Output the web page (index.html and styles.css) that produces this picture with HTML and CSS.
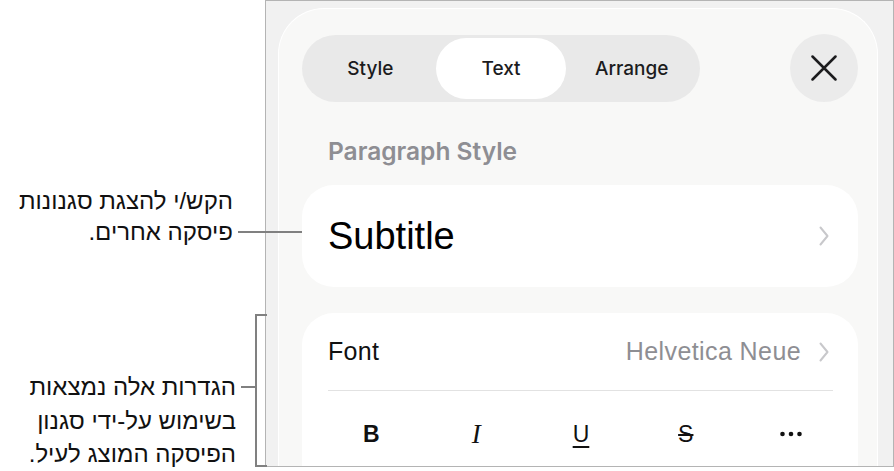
FILE: index.html
```html
<!DOCTYPE html>
<html lang="he">
<head>
    <meta charset="UTF-8">
    <meta name="viewport" content="width=device-width, initial-scale=1.0">
    <title>Paragraph Style</title>
    <link rel="stylesheet" href="styles.css">
</head>
<body>

<div class="page">
    <div class="notes">
        <p class="note note-tap" dir="rtl">הקש/י להצגת סגנונות<br>פיסקה אחרים.</p>
        <p class="note note-settings" dir="rtl">הגדרות אלה נמצאות<br>בשימוש על-ידי סגנון<br>הפיסקה המוצג לעיל.</p>
    </div>

    <div class="frame">
        <div class="sheet">
            <div class="sheet-header">
                <div class="tabs">
                    <span class="tab">Style</span>
                    <span class="tab tab-active">Text</span>
                    <span class="tab">Arrange</span>
                </div>
                <button class="close" aria-label="Close">
                    <svg width="26" height="26" viewBox="0 0 26 26">
                        <path d="M1.5 1.5 L24.5 24.5 M24.5 1.5 L1.5 24.5" />
                    </svg>
                </button>
            </div>

            <div class="section-title">Paragraph Style</div>

            <div class="card style-card">
                <span class="style-name">Subtitle</span>
                <svg class="chevron" width="10" height="20" viewBox="0 0 10 20">
                    <path d="M1.5 1.5 L8.5 10 L1.5 18.5" />
                </svg>
            </div>

            <div class="card font-card">
                <div class="font-row">
                    <span class="font-label">Font</span>
                    <span class="font-value">Helvetica Neue</span>
                    <svg class="chevron" width="10" height="20" viewBox="0 0 10 20">
                        <path d="M1.5 1.5 L8.5 10 L1.5 18.5" />
                    </svg>
                </div>
                <div class="format-row">
                    <span class="fmt fmt-bold">B</span>
                    <span class="fmt fmt-italic">I</span>
                    <span class="fmt fmt-underline">U</span>
                    <span class="fmt fmt-strike">S</span>
                    <span class="fmt fmt-more">
                        <svg width="22" height="6" viewBox="0 0 22 6">
                            <circle cx="2.5" cy="3" r="2.3" />
                            <circle cx="11" cy="3" r="2.3" />
                            <circle cx="19.5" cy="3" r="2.3" />
                        </svg>
                    </span>
                </div>
            </div>
        </div>
    </div>

    <!-- callout lines drawn over the screenshot -->
    <span class="leader leader-tap"></span>
    <span class="bracket"></span>
    <span class="leader leader-settings"></span>
</div>

</body>
</html>
```

FILE: styles.css
```css
body {
    margin: 0;
    background-color: #fff;
    font-family: "Liberation Sans", Arial, sans-serif;
}

.page {
    position: relative;
    display: flex;
    width: 894px;
    height: 471px;
    overflow: hidden;
}

/* callout text */
.notes {
    width: 265px;
    flex: none;
}

.note {
    margin: 0;
    font-size: 24px;
    color: #111;
    text-align: right;
}

.note-tap {
    padding-top: 185px;
    padding-right: 32px;
    line-height: 31px;
}

.note-settings {
    margin-top: 123px;
    padding-right: 29px;
    line-height: 33.5px;
}

.leader,
.bracket {
    position: absolute;
    z-index: 2;
}

.leader {
    height: 2px;
    background-color: #808080;
}

.leader-tap {
    left: 238px;
    top: 231px;
    width: 64px;
}

.leader-settings {
    left: 241px;
    top: 386px;
    width: 15px;
}

.bracket {
    left: 255px;
    top: 314px;
    width: 10px;
    height: 149px;
    border: 2px solid #808080;
    border-right: none;
}

/* screenshot frame */
.frame {
    flex: 1;
    height: 467px;
    box-sizing: border-box;
    border: 1px solid #b4b4b4;
    background-color: #f1f1f1;
    padding: 7px 15px 0 12px;
    overflow: hidden;
}

.sheet {
    height: 100%;
    box-sizing: border-box;
    background-color: #f8f8f7;
    border: 1.5px solid #fff;
    border-bottom: none;
    border-radius: 46px 46px 0 0;
    padding: 25px 19px 0 23px;
}

.sheet-header {
    display: flex;
    justify-content: space-between;
    align-items: center;
    height: 68px;
}

.tabs {
    display: flex;
    width: 398px;
    height: 67px;
    box-sizing: border-box;
    padding: 3px;
    background-color: #e9e9e9;
    border-radius: 34px;
}

.tab {
    flex: 1;
    display: flex;
    align-items: center;
    justify-content: center;
    font-family: Inter, "Liberation Sans", sans-serif;
    font-size: 19px;
    font-weight: 500;
    color: #1c1c1e;
    border-radius: 31px;
}

.tab-active {
    background-color: #fff;
}

.close {
    width: 68px;
    height: 68px;
    padding: 0;
    border: none;
    border-radius: 50%;
    background-color: #ebebeb;
    display: flex;
    align-items: center;
    justify-content: center;
}

.close path {
    stroke: #1c1c1e;
    stroke-width: 2.5;
    stroke-linecap: round;
    fill: none;
}

.section-title {
    margin-top: 34px;
    padding-left: 26px;
    font-family: Inter, "Liberation Sans", sans-serif;
    font-size: 24.5px;
    font-weight: 600;
    line-height: 30px;
    color: #8e8e93;
}

.card {
    background-color: #fff;
    border-radius: 32px;
}

.chevron path {
    stroke: #c8c8cb;
    stroke-width: 2;
    stroke-linecap: round;
    stroke-linejoin: round;
    fill: none;
}

.style-card {
    margin-top: 19px;
    height: 102px;
    display: flex;
    align-items: center;
    justify-content: space-between;
    padding: 0 29px 0 26px;
}

.style-name {
    font-size: 38px;
    color: #000;
}

.font-card {
    margin-top: 26px;
    height: 200px;
}

.font-row {
    display: flex;
    align-items: center;
    height: 77px;
    margin: 0 25px 0 26px;
    padding-right: 4px;
    border-bottom: 1px solid #e2e2e2;
}

.font-label {
    flex: 1;
    font-size: 25px;
    letter-spacing: 0.3px;
    color: #111;
}

.font-value {
    margin-right: 18px;
    font-size: 25px;
    letter-spacing: 0.4px;
    color: #8e8e93;
}

.format-row {
    display: grid;
    grid-template-columns: repeat(5, 1fr);
    height: 86px;
    margin: 0 15px 0 17px;
}

.fmt {
    display: flex;
    align-items: center;
    justify-content: center;
    font-size: 23px;
    color: #111;
}

.fmt-bold {
    font-weight: bold;
}

.fmt-italic {
    font-family: "Liberation Serif", serif;
    font-style: italic;
    font-size: 27px;
}

.fmt-underline {
    text-decoration: underline;
    text-decoration-thickness: 2px;
    text-underline-offset: 4px;
}

.fmt-strike {
    text-decoration: line-through;
    text-decoration-thickness: 2px;
}

.fmt-more circle {
    fill: #111;
}
```
